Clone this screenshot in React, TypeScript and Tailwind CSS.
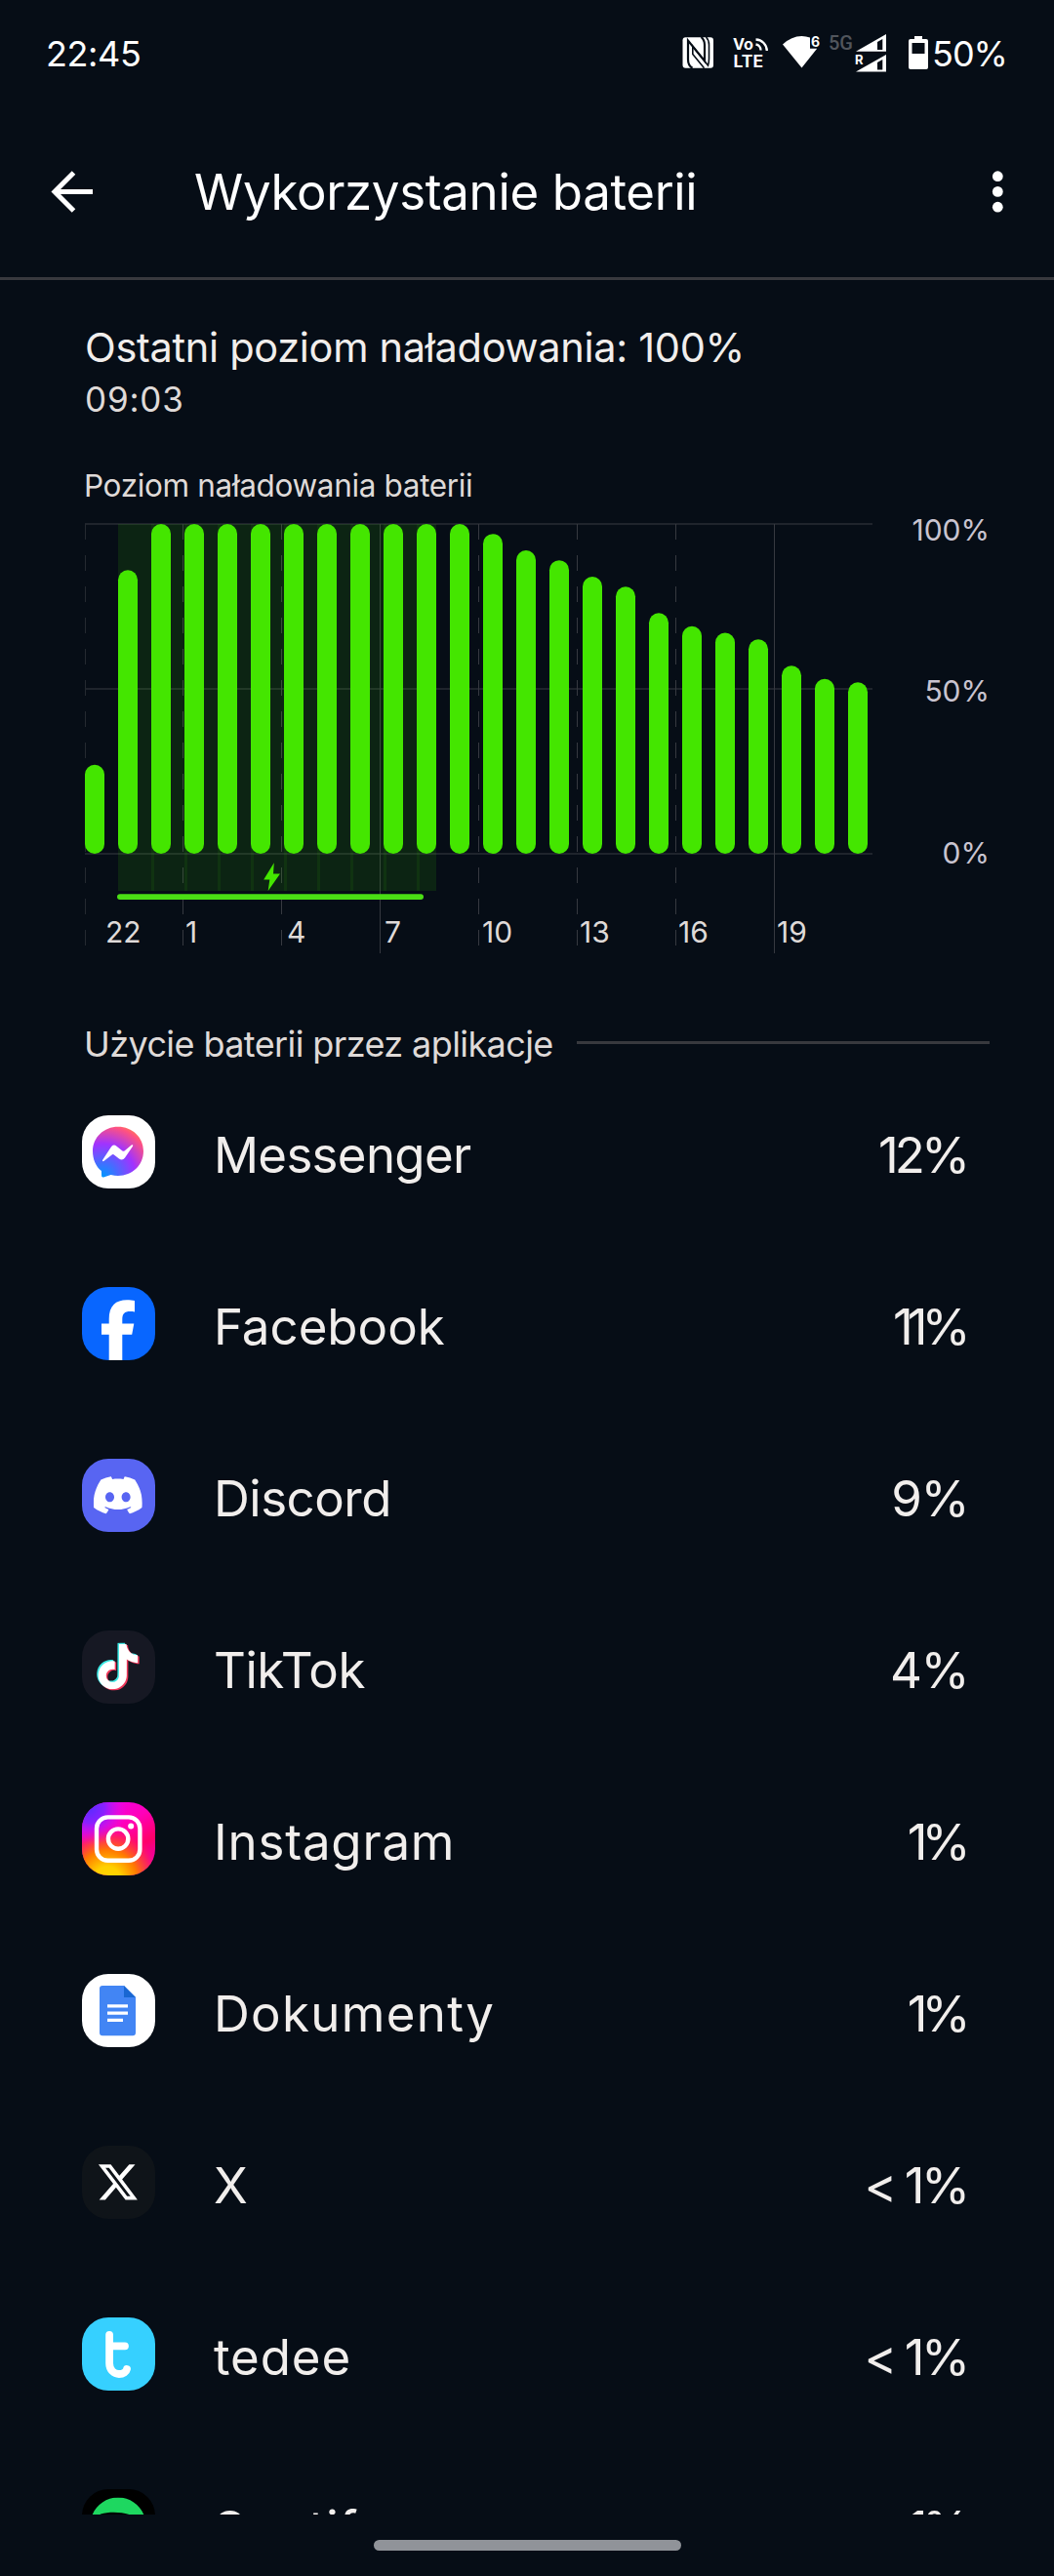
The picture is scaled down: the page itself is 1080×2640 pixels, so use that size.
import type { ReactNode } from 'react';
import { SiDiscord, SiSpotify, SiTiktok, SiX } from 'react-icons/si';

const levels = [
  27, 86, 100, 100, 100, 100, 100, 100, 100, 100, 100, 100, 97, 92, 89, 84, 81, 73, 69, 67, 65, 57, 53, 52,
];

const gridLines = [
  { x: 87, dashed: true },
  { x: 187, dashed: true },
  { x: 288, dashed: true },
  { x: 389, dashed: false },
  { x: 490, dashed: true },
  { x: 591, dashed: true },
  { x: 692, dashed: true },
  { x: 793, dashed: false },
];

const hours = [
  { label: '22', x: 108 },
  { label: '1', x: 190 },
  { label: '4', x: 294 },
  { label: '7', x: 394 },
  { label: '10', x: 494 },
  { label: '13', x: 594 },
  { label: '16', x: 695 },
  { label: '19', x: 796 },
];

function MessengerIcon() {
  return (
    <>
      <defs>
        <radialGradient id="messenger" cx="0.19" cy="0.99" r="1.09">
          <stop offset="0" stopColor="#0099ff" />
          <stop offset="0.6" stopColor="#a033ff" />
          <stop offset="0.93" stopColor="#ff5280" />
          <stop offset="1" stopColor="#ff7061" />
        </radialGradient>
      </defs>
      <rect width="75" height="75" fill="#fff" />
      <path
        fill="url(#messenger)"
        d="M37 11.7C51.5 11.7 63 22.5 63 36.7S51.5 61.9 37 61.9c-2.6 0-5-.3-7.4-1l-7.5 2.5c-1.2.4-2-.1-2-1.3l-.2-5C14.2 52.3 11 45.2 11 36.7 11 22.5 22.5 11.7 37 11.7z"
      />
      <path
        fill="#fff"
        d="M21 46l8.5-13Q32 29 35.5 31.7l6 4.8q1 .5 2 0l7.5-6.2Q53 29.8 52 31.8L44 43.5Q41.5 47 38 44.5l-5.5-4.2q-.7-.5-1.5 0L22.3 47Q20.5 47.5 21 46z"
      />
    </>
  );
}

function FacebookIcon() {
  return (
    <>
      <rect width="75" height="75" fill="#0866ff" />
      <path
        fill="#fff"
        d="M27.7 75V48.7H20V37.4h7.7V33C27.7 19 34.5 13.2 46 13.2c3 0 6 .3 8 .8v11.4c-1.3-.2-3-.3-4.5-.3-6 0-8.2 2.3-8.2 8.5v3.8h12L51.2 48.7h-9.9V75z"
      />
    </>
  );
}

function DiscordIcon() {
  return (
    <>
      <rect width="75" height="75" fill="#5865f2" />
      <SiDiscord x={11.8} y={12.3} size={50} color="#fff" />
    </>
  );
}

function TikTokIcon() {
  return (
    <>
      <rect width="75" height="75" fill="#161823" />
      <SiTiktok x={12.2} y={12.6} size={46.5} color="#3be8e4" />
      <SiTiktok x={15.2} y={15} size={46.5} color="#f0385b" />
      <SiTiktok x={13.7} y={13.8} size={46.5} color="#fff" />
    </>
  );
}

function InstagramIcon() {
  return (
    <>
      <defs>
        <linearGradient id="igBase" x1="0.3" y1="0" x2="0.9" y2="1">
          <stop offset="0" stopColor="#f000e8" />
          <stop offset="0.35" stopColor="#ff00b8" />
          <stop offset="0.65" stopColor="#ff0069" />
          <stop offset="1" stopColor="#e000c8" />
        </linearGradient>
        <radialGradient id="igWarm" gradientUnits="userSpaceOnUse" cx="26" cy="80" r="56">
          <stop offset="0" stopColor="#ffd600" />
          <stop offset="0.25" stopColor="#ffd000" />
          <stop offset="0.55" stopColor="#ff7a00" />
          <stop offset="0.8" stopColor="#ff2a50" stopOpacity="0.8" />
          <stop offset="1" stopColor="#ff0080" stopOpacity="0" />
        </radialGradient>
        <radialGradient id="igCool" gradientUnits="userSpaceOnUse" cx="8" cy="6" r="38">
          <stop offset="0" stopColor="#5a2cff" />
          <stop offset="0.4" stopColor="#8a20ff" />
          <stop offset="1" stopColor="#e810f0" stopOpacity="0" />
        </radialGradient>
      </defs>
      <rect width="75" height="75" fill="url(#igBase)" />
      <rect width="75" height="75" fill="url(#igWarm)" />
      <rect width="75" height="75" fill="url(#igCool)" />
      <g fill="none" stroke="#fff" strokeWidth="4.4">
        <rect x="15" y="15.4" width="44.4" height="44.4" rx="11.5" />
        <circle cx="37.1" cy="37.6" r="10.2" />
      </g>
      <circle cx="50.2" cy="24.6" r="3" fill="#fff" />
    </>
  );
}

function DocsIcon() {
  return (
    <>
      <rect width="75" height="75" fill="#fff" />
      <path fill="#4285f4" d="M21 12h22l12 12v36.2a3 3 0 0 1-3 3H21a3 3 0 0 1-3-3V15a3 3 0 0 1 3-3z" />
      <path fill="#1967d2" d="M43 12l12 12H43z" />
      <path fill="#fff" d="M26 31.2h21v3.2H26zM26 38.5h21v3.2H26zM26 45.8h16V49H26z" />
    </>
  );
}

function XIcon() {
  return (
    <>
      <rect width="75" height="75" fill="#0f1419" />
      <SiX x={16.9} y={17.3} size={40} color="#fff" />
    </>
  );
}

function TedeeIcon() {
  return (
    <>
      <rect width="75" height="75" fill="#36d0ff" />
      <path
        fill="none"
        stroke="#fff"
        strokeWidth="7.8"
        strokeLinecap="round"
        strokeLinejoin="round"
        d="M28.1 17.8V47C28.1 54 33 58 38 58C42.5 58 45.5 55.5 46 53M28.1 29.3H44"
      />
    </>
  );
}

function SpotifyIcon() {
  return (
    <>
      <rect width="75" height="75" fill="#000" />
      <SiSpotify x={8.5} y={8.5} size={57} color="#1ed760" />
    </>
  );
}

const apps: { name: string; usage: string; nameClass: string; usageClass: string; icon: ReactNode }[] = [
  { name: 'Messenger', usage: '12%', nameClass: 'tracking-[-0.7px]', usageClass: 'tracking-[-4px] mr-[2px]', icon: <MessengerIcon /> },
  { name: 'Facebook', usage: '11%', nameClass: 'tracking-normal', usageClass: 'tracking-[-6px] mr-[3.5px]', icon: <FacebookIcon /> },
  { name: 'Discord', usage: '9%', nameClass: 'tracking-[-0.5px]', usageClass: 'tracking-[-1.5px]', icon: <DiscordIcon /> },
  { name: 'TikTok', usage: '4%', nameClass: 'tracking-[-0.5px]', usageClass: 'tracking-[-1.5px]', icon: <TikTokIcon /> },
  { name: 'Instagram', usage: '1%', nameClass: 'tracking-[0.8px]', usageClass: 'tracking-[-6px] mr-[3.5px]', icon: <InstagramIcon /> },
  { name: 'Dokumenty', usage: '1%', nameClass: 'tracking-[1.3px]', usageClass: 'tracking-[-6px] mr-[3.5px]', icon: <DocsIcon /> },
  { name: 'X', usage: '< 1%', nameClass: 'tracking-normal', usageClass: 'tracking-[-3.5px] mr-[1.5px]', icon: <XIcon /> },
  { name: 'tedee', usage: '< 1%', nameClass: 'tracking-[0.9px]', usageClass: 'tracking-[-3.5px] mr-[1.5px]', icon: <TedeeIcon /> },
  { name: 'Spotify', usage: '1%', nameClass: 'tracking-[1px]', usageClass: 'tracking-[-6px] mr-[3.5px]', icon: <SpotifyIcon /> },
];

function StatusIcons() {
  return (
    <svg className="h-11 w-[256px]" viewBox="699 33 256 44" fill="#fff">
      {/* NFC */}
      <rect x="699.5" y="38.3" width="31.5" height="31.5" rx="3" />
      <g fill="none" stroke="#060d16" strokeWidth="2.2">
        <path d="M709.5 69.8Q705 67 705 61V41.5L722 62.5V46Q722 41 718.5 38" />
        <path d="M721.5 69.8L709.8 55.5V47.5L725.5 67Q726.5 64 726.5 60V46Q726.5 41 723.5 38" strokeWidth="1.6" />
      </g>
      {/* VoLTE */}
      <g fontFamily="Inter, 'Noto Sans', sans-serif" fontWeight="700">
        <text x="751" y="51" fontSize="16" textLength="21" lengthAdjust="spacingAndGlyphs">
          Vo
        </text>
        <text x="751.5" y="69.3" fontSize="17" textLength="30.5" lengthAdjust="spacingAndGlyphs">
          LTE
        </text>
      </g>
      <g fill="none" stroke="#fff" strokeWidth="2.3">
        <path d="M774.5 45.5A6 6 0 0 1 779.5 51.5" />
        <path d="M774.5 40.5A11.5 11.5 0 0 1 785.8 52" />
      </g>
      {/* Wi-Fi */}
      <path d="M802 45.5Q811 37 821.5 37Q826 37 830 38.5V49.8H837.2L821.5 69.5z" />
      <text x="831" y="48.2" fontSize="14" fontWeight="700" fontFamily="Inter, 'Noto Sans', sans-serif">
        6
      </text>
      <text
        x="849"
        y="50.8"
        fontSize="20.5"
        fontWeight="500"
        fill="#51555c"
        textLength="25"
        lengthAdjust="spacingAndGlyphs"
        fontFamily="Roboto, 'Noto Sans', sans-serif"
      >
        5G
      </text>
      {/* Signal */}
      <path fillRule="evenodd" d="M877 52.8L908 35V52.8zM899 43V51H904.3V40z" />
      <path fillRule="evenodd" d="M877 73.5L908 56V73.5zM899 64V71.5H904.3V61z" />
      <path fill="#060d16" d="M875 55h11.5v10.5l-5 3h-6.5z" />
      <text x="876" y="66.3" fontSize="13" fontWeight="700" fontFamily="Inter, 'Noto Sans', sans-serif">
        R
      </text>
      {/* Battery */}
      <path
        fillRule="evenodd"
        d="M937 37h8v3h4a2 2 0 0 1 2 2v27a2 2 0 0 1-2 2H933a2 2 0 0 1-2-2V42a2 2 0 0 1 2-2h4zM934.5 44v11h13V44z"
      />
    </svg>
  );
}

function BatteryChart() {
  return (
    <svg
      className="mt-[4px] block h-[460px] w-[1080px]"
      viewBox="0 520 1080 460"
      fontFamily="Inter, 'Noto Sans', sans-serif"
      fontSize="30"
    >
      {/* horizontal grid */}
      <g fill="#1f242c">
        <rect x="87" y="536" width="807" height="2" />
        <rect x="87" y="705" width="807" height="2" />
        <rect x="87" y="874" width="807" height="2" />
      </g>
      {gridLines.map(({ x, dashed }) => (
        <line
          key={x}
          x1={x + 0.5}
          x2={x + 0.5}
          y1={537}
          y2={977}
          stroke={x === 87 ? '#242930' : '#363940'}
          strokeDasharray={dashed ? '16 16' : undefined}
        />
      ))}

      {/* charging period */}
      <rect x="121" y="537" width="326" height="376" fill="#44e600" fillOpacity="0.11" />
      {[...Array(9)].map((_, i) => (
        <rect key={i} x={155 + i * 34} y={537} width="3" height="376" fill="#44e600" fillOpacity="0.08" />
      ))}
      <path fill="#44e600" d="M280.8 884.3L270.2 901.5H276.3L274.7 913L287 895.5H280z" />
      <rect x="120" y="916.2" width="314" height="5.8" rx="2.9" fill="#4ade14" />

      {levels.map((level, i) => (
        <rect
          key={i}
          x={87 + i * 34}
          y={875 - level * 3.38}
          width="20"
          height={level * 3.38}
          rx="10"
          fill="#44e600"
        />
      ))}

      <g fill="#dfdad8">
        {hours.map(({ label, x }) => (
          <text key={label} x={x} y="966">
            {label}
          </text>
        ))}
      </g>
      <g fill="#c9c4d0" textAnchor="end">
        <text x="1014" y="554">100%</text>
        <text x="1014" y="719">50%</text>
        <text x="1014" y="885">0%</text>
      </g>
    </svg>
  );
}

export default function App() {
  return (
    <div className="flex h-[2640px] w-[1080px] flex-col overflow-hidden bg-[#060d16] font-[Inter,'Noto_Sans',sans-serif] text-[#f1eeec]">
      <div className="flex h-[110px] shrink-0 items-center justify-between pl-[47px] pr-[48px] text-[36px] text-white">
        <span className="tracking-[-0.4px]">22:45</span>
        <div className="flex items-center">
          <StatusIcons />
          <span className="w-[77px] tracking-[-1px]">50%</span>
        </div>
      </div>

      <header className="flex h-[177px] shrink-0 items-center border-b-[3px] border-[#38393e] text-white">
        <svg className="ml-[51px] h-12 w-12" viewBox="0 0 48 48" fill="none" stroke="currentColor" strokeWidth="5">
          <path d="M44 23.5H6M24.5 4L5 23.5L24.5 43" />
        </svg>
        <h1 className="ml-[100px] whitespace-nowrap text-[51px] leading-[60px] tracking-[-0.35px]">
          Wykorzystanie baterii
        </h1>
        <svg className="ml-auto mr-[43px] h-12 w-[30px]" viewBox="0 0 30 48" fill="currentColor">
          <circle cx="15.3" cy="7.7" r="5.4" />
          <circle cx="15.3" cy="23.4" r="5.4" />
          <circle cx="15.3" cy="39.2" r="5.4" />
        </svg>
      </header>

      <section className="shrink-0">
        <div className="pl-[87px]">
          <h2 className="mt-[44px] whitespace-nowrap text-[41.5px] leading-[51px] tracking-[-0.3px]">
            Ostatni poziom naładowania: 100%
          </h2>
          <p className="mt-[7px] text-[35px] leading-[40px] tracking-[0.8px] text-[#dfdad8]">09:03</p>
          <p className="mt-[50px] -ml-px text-[31.5px] leading-[37px] tracking-[-0.35px] text-[#dfdad8]">
            Poziom naładowania baterii
          </p>
        </div>
        <BatteryChart />
      </section>

      <section className="shrink-0">
        <div className="mt-[68px] flex h-[44px] items-center pl-[86px] pr-[66px]">
          <h2 className="w-[505px] whitespace-nowrap text-[36px] leading-[44px] tracking-[-0.6px] text-[#dfdad8]">
            Użycie baterii przez aplikacje
          </h2>
          <div className="mb-[3px] h-[3px] flex-1 bg-[#38393e]" />
        </div>

        <ul className="h-[1485px] overflow-hidden">
          {apps.map(({ name, usage, nameClass, usageClass, icon }) => (
            <li key={name} className="flex h-[176px] items-start pl-[84px] pr-[88px] pt-[51px] text-[51px] leading-[82px]">
              <svg className="h-[75px] w-[75px] overflow-hidden rounded-[27px]" viewBox="0 0 75 75">
                {icon}
              </svg>
              <span className={`ml-[60px] flex-1 ${nameClass}`}>{name}</span>
              <span className={`whitespace-nowrap ${usageClass}`}>{usage}</span>
            </li>
          ))}
        </ul>
      </section>

      <div className="mx-auto mt-[26px] h-[11px] w-[315px] shrink-0 rounded-full bg-[#909399]" />
    </div>
  );
}
